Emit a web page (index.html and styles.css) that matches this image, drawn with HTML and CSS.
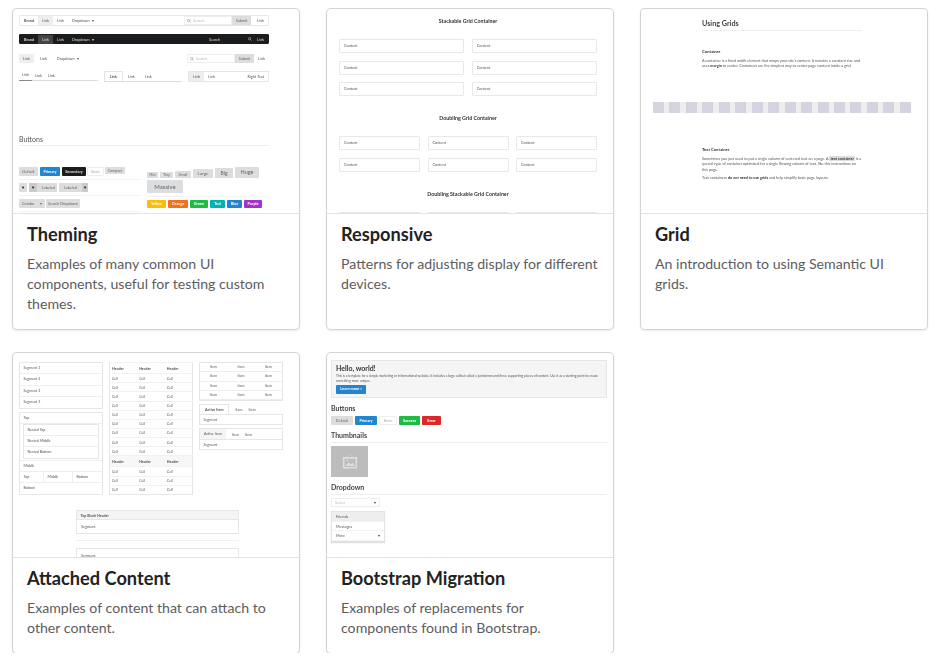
FILE: index.html
```html
<!DOCTYPE html>
<html lang="en">
<head>
    <meta charset="UTF-8">
    <title>Layouts</title>
    <link rel="stylesheet" href="styles.css">
</head>
<body>
    <div class="cards">
        <div class="card">
            <div class="shot theming">
                <div class="menu">
                    <b class="mi">Brand</b><span class="mi on">Link</span><span class="mi">Link</span><span class="mi">Dropdown &nbsp;▾</span>
                    <span class="fill"></span>
                    <span class="search"><svg class="glass" viewBox="0 0 10 10"><circle cx="4" cy="4" r="3"/><path d="M6 6l3 3"/></svg>Search</span><span class="submit">Submit</span><span class="mi end">Link</span>
                </div>
                <div class="menu dark">
                    <b class="mi">Brand</b><span class="mi on">Link</span><span class="mi">Link</span><span class="mi">Dropdown &nbsp;▾</span>
                    <span class="fill"></span>
                    <span class="mi">Search</span><span class="gap-search"><svg class="glass" viewBox="0 0 10 10"><circle cx="4" cy="4" r="3"/><path d="M6 6l3 3"/></svg></span><span class="mi end">Link</span>
                </div>
                <div class="menu plain">
                    <span class="mi on">Link</span><span class="mi">Link</span><span class="mi">Dropdown &nbsp;▾</span>
                    <span class="fill"></span>
                    <span class="search"><svg class="glass" viewBox="0 0 10 10"><circle cx="4" cy="4" r="3"/><path d="M6 6l3 3"/></svg>Search</span><span class="submit">Submit</span><span class="mi end">Link</span>
                </div>
                <div class="tabs">
                    <div class="tab-set pointing"><span class="mi on">Link</span><span class="mi">Link</span><span class="mi">Link</span></div>
                    <div class="tab-set tabular"><span class="mi on">Link</span><span class="mi">Link</span><span class="mi">Link</span></div>
                    <div class="tab-set boxed"><span class="mi on">Link</span><span class="mi">Link</span><span class="fill"></span><span class="mi">Right Text</span></div>
                </div>
                <div class="btn-title">Buttons</div>
                <div class="btn-cols">
                    <div class="btn-left">
                        <div class="btn-row">
                            <span class="btn w19">Default</span><span class="btn blue w20">Primary</span><span class="btn black w24">Secondary</span><span class="btn basic w17">Basic</span><span class="btn w20 thin">Compact</span>
                        </div>
                        <div class="btn-row">
                            <span class="btn sq">♥</span><span class="btn labeled"><i>♥</i>Labeled</span><span class="btn labeled right">Labeled<i>♥</i></span>
                        </div>
                        <div class="btn-row">
                            <span class="btn combo">Combo <i>▾</i></span><span class="btn w34">Search Dropdown</span>
                        </div>
                    </div>
                    <div class="btn-right">
                        <div class="size-row">
                            <span class="btn s1">Mini</span><span class="btn s2">Tiny</span><span class="btn s3">Small</span><span class="btn s4">Large</span><span class="btn s5">Big</span><span class="btn s6">Huge</span><span class="btn s7">Massive</span>
                        </div>
                        <div class="color-row">
                            <span class="btn c-yellow">Yellow</span><span class="btn c-orange">Orange</span><span class="btn c-green">Green</span><span class="btn c-teal">Teal</span><span class="btn c-blue">Blue</span><span class="btn c-purple">Purple</span>
                        </div>
                    </div>
                </div>
            </div>
            <div class="info">
                <h2>Theming</h2>
                <p>Examples of many common UI components, useful for testing custom themes.</p>
            </div>
        </div>

        <div class="card">
            <div class="shot responsive">
                <h4>Stackable Grid Container</h4>
                <div class="boxes two">
                    <div>Content</div><div>Content</div><div>Content</div><div>Content</div><div>Content</div><div>Content</div>
                </div>
                <h4>Doubling Grid Container</h4>
                <div class="boxes three">
                    <div>Content</div><div>Content</div><div>Content</div><div>Content</div><div>Content</div><div>Content</div>
                </div>
                <h4>Doubling Stackable Grid Container</h4>
                <div class="boxes three">
                    <div>Content</div><div>Content</div><div>Content</div>
                </div>
            </div>
            <div class="info">
                <h2>Responsive</h2>
                <p>Patterns for adjusting display for different devices.</p>
            </div>
        </div>

        <div class="card">
            <div class="shot grids">
                <div class="copy">
                    <h3>Using Grids</h3>
                    <h5>Container</h5>
                    <p>A container is a fixed width element that wraps your site's content. It remains a constant size and uses <b>margin</b> to center. Containers are the simplest way to center page content inside a grid.</p>
                </div>
                <div class="strip">
                    <i></i><i></i><i></i><i></i><i></i><i></i><i></i><i></i><i></i><i></i><i></i><i></i><i></i><i></i><i></i><i></i>
                </div>
                <div class="copy">
                    <h5>Text Container</h5>
                    <p>Sometimes you just need to put a single column of centered text on a page. A <b class="code">text container</b> is a special type of container optimized for a single flowing column of text, like this instructions on this page.</p>
                    <p>Text containers <b>do not need to use grids</b> and help simplify basic page layouts.</p>
                </div>
            </div>
            <div class="info">
                <h2>Grid</h2>
                <p>An introduction to using Semantic UI grids.</p>
            </div>
        </div>

        <div class="card">
            <div class="shot attached">
                <div class="att-cols">
                    <div>
                        <div class="seg-group first">
                            <div>Segment 1</div><div>Segment 2</div><div>Segment 3</div><div>Segment 3</div>
                        </div>
                        <div class="seg-group nested">
                            <div>Top</div>
                            <div class="inner">
                                <div class="seg-group"><div>Nested Top</div><div>Nested Middle</div><div>Nested Bottom</div></div>
                            </div>
                            <div>Middle</div>
                            <div class="triple"><span>Top</span><span>Middle</span><span>Bottom</span></div>
                            <div>Bottom</div>
                        </div>
                    </div>
                    <table class="cells">
                        <tr class="head"><td>Header</td><td>Header</td><td>Header</td></tr>
                        <tr><td>Cell</td><td>Cell</td><td>Cell</td></tr>
                        <tr><td>Cell</td><td>Cell</td><td>Cell</td></tr>
                        <tr><td>Cell</td><td>Cell</td><td>Cell</td></tr>
                        <tr><td>Cell</td><td>Cell</td><td>Cell</td></tr>
                        <tr><td>Cell</td><td>Cell</td><td>Cell</td></tr>
                        <tr><td>Cell</td><td>Cell</td><td>Cell</td></tr>
                        <tr><td>Cell</td><td>Cell</td><td>Cell</td></tr>
                        <tr><td>Cell</td><td>Cell</td><td>Cell</td></tr>
                        <tr><td>Cell</td><td>Cell</td><td>Cell</td></tr>
                        <tr class="head grey"><td>Header</td><td>Header</td><td>Header</td></tr>
                        <tr><td>Cell</td><td>Cell</td><td>Cell</td></tr>
                        <tr><td>Cell</td><td>Cell</td><td>Cell</td></tr>
                        <tr><td>Cell</td><td>Cell</td><td>Cell</td></tr>
                    </table>
                    <div>
                        <div class="items">
                            <span>Item</span><span>Item</span><span>Item</span><span>Item</span><span>Item</span><span>Item</span><span>Item</span><span>Item</span><span>Item</span><span>Item</span><span>Item</span><span>Item</span>
                        </div>
                        <div class="att-tabs"><b>Active Item</b><span>Item</span><span>Item</span></div>
                        <div class="att-seg">Segment</div>
                        <div class="att-tabs boxed-tabs"><b>Active Item</b><span>Item</span><span>Item</span></div>
                        <div class="att-seg">Segment</div>
                    </div>
                </div>
                <div class="block-wrap">
                    <div class="block-head">Top Block Header</div>
                    <div class="block-seg">Segment</div>
                    <div class="block-rule"></div>
                    <div class="block-seg last">Segment</div>
                </div>
            </div>
            <div class="info">
                <h2>Attached Content</h2>
                <p>Examples of content that can attach to other content.</p>
            </div>
        </div>

        <div class="card">
            <div class="shot boot">
                <div class="jumbo">
                    <h3>Hello, world!</h3>
                    <p>This is a template for a simple marketing or informational website. It includes a large callout called a jumbotron and three supporting pieces of content. Use it as a starting point to create something more unique.</p>
                    <span class="btn blue learn">Learn more »</span>
                </div>
                <h4>Buttons</h4>
                <div class="boot-btns">
                    <span class="btn">Default</span><span class="btn blue">Primary</span><span class="btn basic">Basic</span><span class="btn c-green">Success</span><span class="btn c-red">Error</span>
                </div>
                <h4 class="ruled">Thumbnails</h4>
                <div class="thumb">
                    <svg viewBox="0 0 20 20" width="18" height="18"><path d="M3 6.500h14v11H3z" fill="none" stroke="#dedede" stroke-width="1.800"/><path d="M5 15.500l3.500-4 2.500 2 2-1.500 2.500 3.500z" fill="#dedede"/><circle cx="7" cy="9.500" r="1" fill="#dedede"/><path d="M7.500 5L10 2.500 12.500 5" fill="none" stroke="#dedede" stroke-width=".8" stroke-dasharray="1 1"/></svg>
                </div>
                <h4 class="ruled">Dropdown</h4>
                <div class="select"><span>Select</span><i>▾</i></div>
                <div class="drop-menu">
                    <div class="on">Friends</div><div>Messages</div><div>More<i>▾</i></div>
                </div>
            </div>
            <div class="info">
                <h2>Bootstrap Migration</h2>
                <p>Examples of replacements for components found in Bootstrap.</p>
            </div>
        </div>
    </div>
</body>
</html>
```

FILE: styles.css
```css
body {
    margin: 0;
    background-color: #fff;
    font-family: "Lato", "Liberation Sans", sans-serif;
    color: #333;
    overflow: hidden;
}
.cards {
    display: grid;
    grid-template-columns: repeat(3, 286px);
    column-gap: 28px;
    row-gap: 24px;
    padding: 9px 0 0 13px;
    align-items: start;
}
.card {
    background-color: #fff;
    border-radius: 4px;
    box-shadow: 0 1px 3px 0 #d4d4d5, 0 0 0 1px #d4d4d5;
    overflow: hidden;
}
.card:nth-child(-n+3) .info {
    height: 116px;
}
.card:nth-child(n+4) .info {
    height: 96px;
}
.info {
    box-sizing: border-box;
    border-top: 1px solid #e2e2e3;
    padding: 9px 14px 0;
}
.info h2 {
    margin: 0 0 9px;
    font-size: 18.200px;
    line-height: 22px;
    font-weight: 700;
    color: #222;
}
.info p {
    margin: 0;
    font-size: 14.150px;
    line-height: 20px;
    color: #5d5d5d;
}

/* thumbnails */
.shot {
    box-sizing: border-box;
    height: 204px;
    overflow: hidden;
    font-size: 3.800px;
    color: #555;
    filter: blur(0.45px);
}
.theming {
    padding: 6px 30px 0 6px;
}
.menu {
    display: flex;
    align-items: center;
    height: 11px;
    border: 1px solid #e6e6e6;
    border-radius: 1px;
    margin-bottom: 8px;
    box-sizing: border-box;
}
.mi {
    padding: 0 4px;
    line-height: 9px;
}
.mi.on {
    background-color: #eee;
}
.mi.end {
    padding: 0 4px 0 6px;
}
.fill {
    flex: 1;
}
.search {
    display: flex;
    align-items: center;
    width: 48px;
    height: 9px;
    box-sizing: border-box;
    border: 1px solid #eee;
    color: #bbb;
    padding-left: 2px;
}
.glass {
    width: 4px;
    height: 4px;
    margin-right: 2px;
    fill: none;
    stroke: #888;
    stroke-width: 1.400;
}
.submit {
    width: 19px;
    height: 9px;
    line-height: 9px;
    text-align: center;
    background-color: #ddd;
    color: #666;
}
.menu.dark {
    background-color: #1b1c1d;
    border-color: #1b1c1d;
    color: #ddd;
    height: 10px;
    margin-bottom: 10px;
}
.menu.dark .mi.on {
    background-color: #444;
}
.dark .glass {
    stroke: #ccc;
}
.gap-search {
    margin: 0 -3px 0 24px;
    display: flex;
}
.menu.plain {
    border: none;
    height: 9px;
    margin-bottom: 8px;
}
.menu.plain .mi {
    padding: 0 4px;
    margin-right: 2px;
}
.menu.plain .mi.end {
    margin-right: 0;
}
.tabs {
    display: flex;
    gap: 6px;
    height: 11px;
}
.tab-set {
    flex: 1;
    display: flex;
    align-items: center;
    box-sizing: border-box;
}
.pointing {
    height: 10px;
    border-bottom: 1px solid #ddd;
}
.pointing .mi {
    padding: 0 3px;
}
.pointing .mi.on {
    background: none;
    line-height: 8px;
    border-bottom: 1px solid #888;
    margin-bottom: -1px;
    padding: 0 3px 1px 3px;
}
.tabular {
    border-bottom: 1px solid #ddd;
}
.tabular .mi {
    padding: 0 5px;
}
.tabular .mi.on {
    background: #fff;
    border: 1px solid #e4e4e4;
    border-bottom: none;
    line-height: 9px;
    font-weight: 700;
}
.boxed {
    border: 1px solid #e6e6e6;
}
.btn-title {
    margin-top: 53px;
    font-size: 7px;
    line-height: 9px;
    padding-bottom: 1px;
    border-bottom: 1px solid #eee;
    color: #555;
}
.btn-cols {
    display: flex;
    gap: 6px;
    margin-top: 21px;
}
.btn-left {
    width: 122px;
}
.btn-right {
    flex: 1;
}
.btn {
    display: inline-block;
    background-color: #dcddde;
    color: #666;
    border-radius: 1px;
    text-align: center;
    height: 8px;
    line-height: 8px;
    box-sizing: border-box;
}
.btn.blue {
    background-color: #2185d0;
    color: #fff;
    font-weight: 700;
}
.btn.black {
    background-color: #1b1c1d;
    color: #ddd;
    font-weight: 700;
}
.btn.basic {
    background-color: #fff;
    border: 1px solid #eee;
    line-height: 6px;
    color: #aaa;
}
.btn-row {
    display: flex;
    gap: 2px;
    padding-bottom: 3px;
    margin-bottom: 3px;
    border-bottom: 1px solid #f2f2f2;
}
.btn-row .btn {
    height: 9px;
    line-height: 9px;
}
.w19 { width: 19px; }
.w20 { width: 20px; }
.w24 { width: 24px; }
.w17 { width: 17px; margin: 0 -1px 0 -1px; }
.w34 { width: 34px; }
.btn-row .btn.thin {
    height: 7px;
    line-height: 7px;
}
.btn-row .btn.basic {
    line-height: 7px;
}
.btn-row .sq {
    width: 8px;
    font-size: 4.500px;
    color: #333;
}
.btn.labeled {
    display: flex;
    align-items: center;
    width: 28px;
    gap: 5px;
}
.labeled i {
    width: 8px;
    height: 100%;
    font-style: normal;
    font-size: 4.500px;
    color: #333;
    background-color: #c9cacb;
}
.btn.labeled.right {
    padding-left: 5px;
    width: 29px;
}
.combo {
    width: 26px;
}
.combo i {
    font-style: normal;
    margin-left: 5px;
}
.btn-row .combo {
    margin-right: -1px;
}
.size-row {
    display: flex;
    flex-wrap: wrap;
    align-items: flex-end;
    gap: 2px;
    width: 122px;
    padding-bottom: 3px;
    margin-bottom: 3px;
    border-bottom: 1px solid #f2f2f2;
}
.s1 { width: 11px; height: 6px; line-height: 6px; font-size: 3px; }
.s2 { width: 13px; height: 6px; line-height: 6px; }
.s3 { width: 16px; height: 7px; line-height: 7px; }
.s4 { width: 20px; height: 9px; line-height: 9px; font-size: 4.500px; }
.s5 { width: 18px; height: 10px; line-height: 10px; font-size: 5px; }
.s6 { width: 24px; height: 11px; line-height: 11px; font-size: 5.500px; }
.s7 { width: 36px; height: 13px; line-height: 13px; font-size: 6px; }
.color-row {
    display: flex;
    gap: 2px;
}
.btn[class*="c-"] {
    color: #fff;
    font-weight: 700;
}
.c-yellow { width: 19px; background-color: #fbbd08; }
.c-orange { width: 20px; background-color: #f2711c; }
.c-green { width: 18px; background-color: #21ba45; }
.c-teal { width: 15px; background-color: #00b5ad; }
.c-blue { width: 15px; background-color: #2185d0; }
.c-purple { width: 18px; background-color: #a333c8; }
.c-red { background-color: #db2828; }

/* grid examples */
.responsive {
    padding: 0 16px 0 12px;
    text-align: left;
}
.responsive h4 {
    margin: 0;
    height: 30px;
    line-height: 25px;
    font-size: 5.300px;
    text-align: center;
    font-weight: 700;
    color: #333;
}
.boxes {
    display: grid;
    gap: 7.500px;
    margin-bottom: 10px;
}
.boxes div {
    box-sizing: border-box;
    height: 14px;
    line-height: 12px;
    padding-left: 4px;
    border: 1px solid #e8e8e8;
    border-radius: 1px;
}
.boxes.two {
    grid-template-columns: 1fr 1fr;
}
.boxes.three {
    grid-template-columns: 1fr 1fr 1fr;
}
.grids .copy {
    width: 160px;
    margin-left: 61px;
}
.grids h3 {
    margin: 0;
    padding: 10px 0 2px;
    font-size: 7.200px;
    line-height: 9px;
    color: #444;
    border-bottom: 1px solid #eee;
    font-weight: 700;
}
.grids h5 {
    margin: 0 0 4px;
    padding-top: 18px;
    font-size: 4.200px;
    line-height: 5px;
    color: #333;
    font-weight: 700;
}
.grids .strip + .copy h5 {
    padding-top: 34px;
}
.grids p {
    margin: 0 0 3.500px;
    font-size: 3.750px;
    line-height: 5.300px;
    color: #555;
}
.grids b {
    color: #333;
}
.code {
    background-color: #ddd;
    padding: 0 1px;
}
.strip {
    display: flex;
    justify-content: space-between;
    width: 258px;
    margin: 33px 0 0 12px;
    background-color: #eee;
    height: 11.500px;
}
.strip i {
    width: 11px;
    background-color: #d6d3e0;
}

/* attached */
.attached {
    padding: 9px 0 0 6px;
    font-size: 3.600px;
}
.att-cols {
    display: flex;
    gap: 6px;
    align-items: flex-start;
}
.att-cols > div:first-child {
    width: 84px;
}
.att-cols > div:last-child {
    width: 84px;
}
.seg-group {
    border: 1px solid #e6e6e6;
    border-radius: 1px;
    margin-bottom: 3px;
}
.seg-group > div {
    box-sizing: border-box;
    height: 11px;
    line-height: 10px;
    padding-left: 3.500px;
    border-bottom: 1px solid #eee;
}
.seg-group.first > div {
    height: 11.250px;
}
.seg-group > div:last-child {
    border-bottom: none;
}
.nested > div.inner {
    height: auto;
    padding: 0 3px;
}
.nested .seg-group {
    margin-bottom: 1px;
}
.triple {
    display: grid;
    grid-template-columns: 24px 29px 1fr;
}
.nested .triple {
    padding-left: 0;
}
.triple span {
    padding-left: 3.500px;
    border-right: 1px solid #eee;
}
.triple span:last-child {
    border-right: none;
}
.cells {
    border-collapse: collapse;
    width: 84px;
    border: 1px solid #e6e6e6;
    font-size: 3.600px;
}
.cells td {
    padding: 0 0 0 2px;
    height: 8.100px;
    line-height: 5px;
    border-top: 1px solid #f1f1f1;
    width: 33%;
}
.cells .head td {
    height: 10.300px;
    font-weight: 700;
}
.cells .grey td {
    background-color: #f6f7f7;
}
.items {
    display: grid;
    grid-template-columns: repeat(3, 1fr);
    border: 1px solid #e6e6e6;
    margin-bottom: 3px;
}
.items span {
    height: 9.250px;
    line-height: 8px;
    text-align: center;
    border-bottom: 1px solid #eee;
    box-sizing: border-box;
}
.att-tabs {
    display: flex;
    gap: 6px;
    align-items: center;
    height: 10px;
    padding-left: 0;
}
.att-tabs b {
    padding: 0 5px;
    line-height: 10px;
    height: 10px;
    border: 1px solid #e6e6e6;
    border-bottom: none;
    box-sizing: border-box;
}
.att-seg {
    box-sizing: border-box;
    height: 11px;
    line-height: 10px;
    padding-left: 3.500px;
    border: 1px solid #e6e6e6;
    margin-bottom: 3px;
}
.boxed-tabs {
    border: 1px solid #e6e6e6;
    border-bottom: none;
    font-weight: 400;
}
.boxed-tabs b {
    border: none;
    font-weight: 400;
    background-color: #f5f5f5;
    padding: 0 4px;
}
.block-wrap {
    width: 163px;
    margin: 12px 0 0 57px;
}
.block-head {
    box-sizing: border-box;
    height: 9.500px;
    line-height: 9px;
    padding-left: 3.500px;
    background-color: #f3f4f5;
    border: 1px solid #e6e6e6;
    font-weight: 700;
}
.block-seg {
    box-sizing: border-box;
    height: 14px;
    line-height: 13px;
    padding-left: 4px;
    border: 1px solid #e6e6e6;
    border-top: none;
    font-size: 3.800px;
}
.block-seg.last {
    border-top: 1px solid #e6e6e6;
}
.block-rule {
    height: 6px;
    border-bottom: 1px solid #f0f0f0;
    margin-bottom: 7px;
}

/* bootstrap */
.boot {
    padding: 7px 6px 0 4px;
}
.jumbo {
    box-sizing: border-box;
    height: 38px;
    padding: 3px 4px 0;
    background-color: #f5f5f5;
    border: 1px solid #e6e6e6;
}
.jumbo h3 {
    margin: 0 0 1px;
    font-size: 7px;
    line-height: 9px;
    color: #333;
}
.jumbo p {
    margin: 0 0 1px;
    font-size: 3.250px;
    line-height: 5px;
}
.learn {
    width: 30px;
    height: 8.500px;
    line-height: 8.500px;
}
.boot h4 {
    margin: 6px 0 4px;
    font-size: 7px;
    line-height: 8px;
    font-weight: 700;
    color: #444;
}
.boot h4.ruled {
    margin: 6px 0 3px;
    padding-bottom: 3px;
    border-bottom: 1px solid #eee;
}
.boot-btns {
    display: flex;
    gap: 2px;
}
.boot-btns .btn {
    height: 9px;
    line-height: 9px;
    width: 22px;
}
.boot-btns .basic {
    line-height: 7px;
    width: 18px;
}
.boot-btns .c-green {
    width: 21px;
}
.boot-btns .c-red {
    width: 19px;
}
.thumb {
    display: flex;
    align-items: center;
    justify-content: center;
    width: 37px;
    height: 31px;
    margin-bottom: 1px;
    background-color: #bcbcbc;
}
.thumb svg {
    margin-top: -2px;
}
.select {
    display: flex;
    justify-content: space-between;
    box-sizing: border-box;
    width: 49px;
    height: 9px;
    line-height: 8px;
    padding: 0 3px;
    border: 1px solid #eee;
    color: #bbb;
}
.select i, .drop-menu i {
    font-style: normal;
    color: #444;
}
.drop-menu {
    width: 52px;
    margin-top: 4px;
    border: 1px solid #e4e4e4;
    box-shadow: 0 1px 1px #ddd;
}
.drop-menu div {
    display: flex;
    justify-content: space-between;
    box-sizing: border-box;
    height: 9.500px;
    line-height: 9px;
    padding: 0 4px;
    border-bottom: 1px solid #f2f2f2;
}
.drop-menu div.on {
    background-color: #eee;
}
```
